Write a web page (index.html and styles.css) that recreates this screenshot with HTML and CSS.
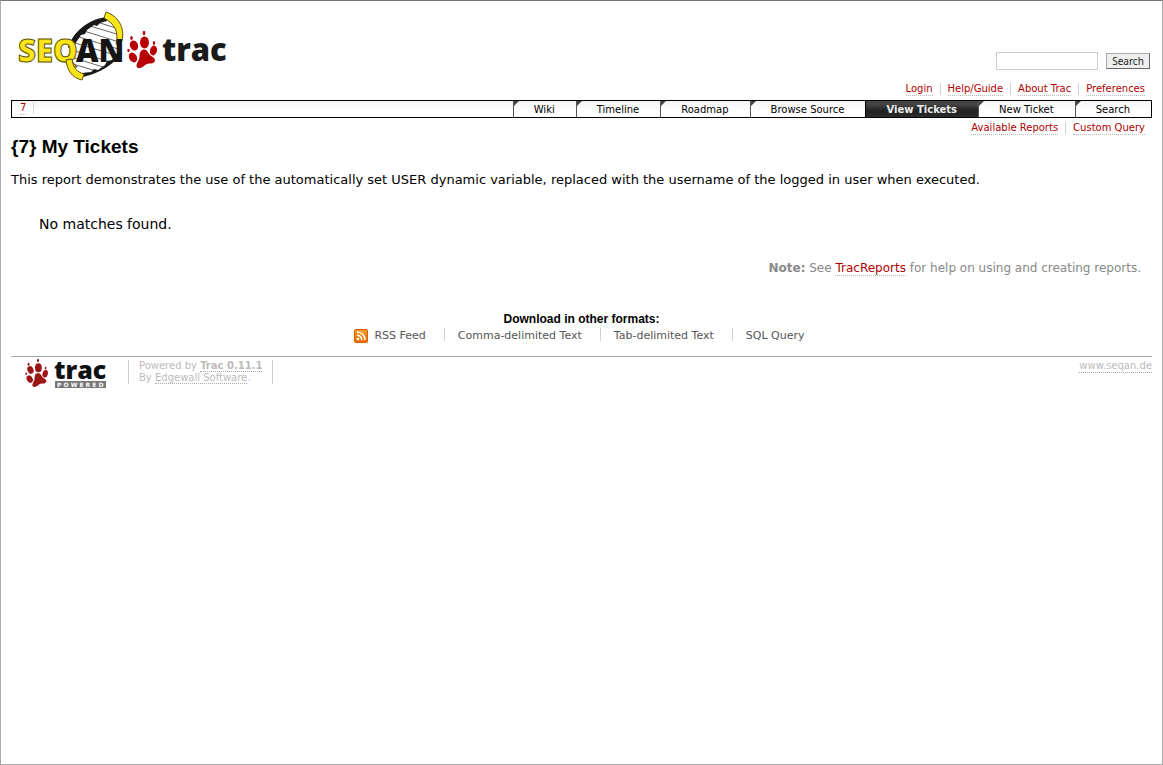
FILE: index.html
```html
<!DOCTYPE html>
<html lang="en">
<head>
<meta charset="utf-8">
<title>{7} My Tickets – SeqAn</title>
<link rel="stylesheet" href="styles.css">
</head>
<body>
<svg class="defs" aria-hidden="true">
  <symbol id="paw" viewBox="0 0 30 37">
    <path d="M17 18.500c3 0 4 3 5.500 5s5.500 3 5.500 5.500c0 3-3 3.500-6 3.500-4 0-5.500 4.500-9.500 4.500-3 0-3.500-2-2.500-4.500s2.500-4 2.500-7 1-7 4.500-7z"/>
    <ellipse cx="7" cy="14.500" rx="4" ry="5.200" transform="rotate(-22 7 14.500)"/>
    <ellipse cx="17.500" cy="11.500" rx="4.500" ry="6" />
    <ellipse cx="26.500" cy="19.500" rx="3.500" ry="5" transform="rotate(14 26.500 19.500)"/>
    <ellipse cx="6" cy="26.500" rx="3.800" ry="5.200" transform="rotate(-30 6 26.500)"/>
    <ellipse cx="17" cy="2" rx="1.300" ry="2.200"/>
    <ellipse cx="4.500" cy="7" rx="1.300" ry="2"/>
    <ellipse cx="27" cy="12" rx="1.100" ry="2"/>
    <ellipse cx="1.500" cy="19.500" rx="1.200" ry="1.800"/>
  </symbol>
</svg>

<header class="banner">
  <a class="logo" href="#" aria-label="SEQAN trac">
    <svg width="220" height="76" viewBox="11 8 220 76">
      <path class="helix" d="M69 50C75 30 90 20 106 19L118 28C120 48 108 66 83 73Q70 66 69 50z"/>
      <path class="rungs" d="M97 22l22 7M90 26l30 9M84 31l35 11M79 37l39 12M75 43l40 12M72 50l38 12M71 57l32 10M73 64l20 6"/>
      <path class="strand" d="M68 48C73 32 87 20 106 17l1 4-7 2-3 3-3-1-7 5-2 4-4 1-6 9zM82 73l9-1 3-3 4 1 7-5 2-4 5-1 6-8 4 1C113 65 100 73 83 77z"/>
      <path class="ribbon" d="M106 12C118 16 125 27 122 41l-4 4-2-1C119 32 115 24 104 18z"/>
      <text class="logo-seq" x="18" y="62">SEQ</text>
      <path class="ribbon" d="M66 60l6-1C73 68 77 72 84 74l-2 6C72 78 67 70 66 60z"/>
      <text class="logo-an" x="76" y="62">AN</text>
      <use class="paw" href="#paw" x="127" y="31" width="30" height="37"/>
      <text class="logo-trac" x="162" y="61">trac</text>
    </svg>
  </a>
  <div class="tools">
    <form class="search">
      <input type="text" aria-label="Search">
      <button type="button">Search</button>
    </form>
    <nav class="links" aria-label="Account">
      <a href="#">Login</a><a href="#">Help/Guide</a><a href="#">About Trac</a><a href="#">Preferences</a>
    </nav>
  </div>
</header>

<div class="mainnav">
  <div class="path"><a href="#">7</a></div>
  <nav class="tabs" aria-label="Main">
    <a href="#">Wiki</a>
    <a href="#">Timeline</a>
    <a href="#">Roadmap</a>
    <a href="#">Browse Source</a>
    <a class="active" href="#">View Tickets</a>
    <a href="#">New Ticket</a>
    <a href="#">Search</a>
  </nav>
</div>

<nav class="links context" aria-label="Reports">
  <a href="#">Available Reports</a><a href="#">Custom Query</a>
</nav>

<main>
  <h1>{7} My Tickets</h1>
  <p class="description">This report demonstrates the use of the automatically set USER dynamic variable, replaced with the username of the logged in user when executed.</p>
  <p class="empty">No matches found.</p>
  <p class="help"><strong>Note:</strong> See <a href="#">TracReports</a> for help on using and creating reports.</p>
</main>

<section class="formats">
  <h2>Download in other formats:</h2>
  <div class="format-list">
    <a class="rss" href="#"><svg width="14" height="14" viewBox="0 0 14 14" aria-hidden="true">
      <defs><linearGradient id="orange" x2="0" y2="1"><stop stop-color="#f8a02c"/><stop offset="1" stop-color="#ee6c04"/></linearGradient></defs>
      <rect x=".5" y=".5" width="13" height="13" rx="1.500" fill="url(#orange)" stroke="#dc5c00"/>
      <circle cx="4" cy="10" r="1.300" fill="#fff"/>
      <path d="M3 6.200a4.800 4.800 0 0 1 4.800 4.800M3 3a8 8 0 0 1 8 8" fill="none" stroke="#fff" stroke-width="1.500"/>
    </svg>RSS Feed</a><a href="#">Comma-delimited Text</a><a href="#">Tab-delimited Text</a><a href="#">SQL Query</a>
  </div>
</section>

<footer class="footer">
  <a class="powered" href="#" aria-label="Trac Powered">
    <svg width="107" height="31" viewBox="0 0 107 31">
      <use class="paw-small" href="#paw" x="13" y="2" width="25" height="28"/>
      <text class="powered-trac" x="43" y="22">trac</text>
      <rect x="44" y="24" width="51" height="7" fill="#777"/>
      <text class="powered-label" x="46" y="30">P O W E R E D</text>
    </svg>
  </a>
  <p class="credits">Powered by <a href="#"><strong>Trac 0.11.1</strong></a><br>By <a href="#">Edgewall Software</a>.</p>
  <a class="site" href="#">www.seqan.de</a>
</footer>
</body>
</html>
```
FILE: styles.css
```css
* { box-sizing: border-box; }

body {
  margin: 0;
  min-height: 100vh;
  padding: 7px 10px;
  border: 1px solid #aaa;
  border-top-color: #777;
  background: #fff;
  color: #000;
  font: 13px/16px Verdana, "DejaVu Sans", sans-serif;
}

p, h1, h2 { margin: 0; }

a {
  color: #b00000;
  text-decoration: none;
}

.defs {
  position: absolute;
  width: 0;
  height: 0;
}

.banner {
  display: flex;
  justify-content: space-between;
  height: 92px;
}

.logo svg, .powered svg { display: block; overflow: visible; }

.helix { fill: #fff; }
.rungs { fill: none; stroke: #666; stroke-width: 1; }
.strand { fill: #181818; }
.ribbon { fill: #fde31a; stroke: #5c5500; stroke-width: 1; }
.paw { fill: #b60205; }
.paw-small { fill: #9c1515; }

.logo-seq, .logo-an, .logo-trac, .powered-trac {
  font-family: "Open Sans", sans-serif;
  font-weight: 800;
}

.logo-seq, .logo-an, .logo-trac { font-size: 31px; }
.logo-seq { fill: #fde31a; stroke: #5c5500; stroke-width: 1; }
.logo-an { fill: #151515; }
.logo-trac { fill: #1b1b1b; }
.powered-trac { font-size: 25px; fill: #111; }
.powered-label { font: bold 6px "DejaVu Sans", sans-serif; fill: #fff; }

.tools {
  display: flex;
  flex-direction: column;
  align-items: flex-end;
  justify-content: flex-end;
  gap: 13px;
  padding-bottom: 4px;
}

.search {
  display: flex;
  align-items: center;
  gap: 8px;
  padding-right: 2px;
}

.search input {
  width: 102px;
  height: 18px;
  border: 1px solid #ccc;
  padding: 0 2px;
  font: inherit;
}

.search button {
  width: 44px;
  height: 16px;
  padding: 0;
  border: 1px solid;
  border-color: #aaa #666 #666 #aaa;
  background: #eee;
  color: #222;
  font: 10px/13px "Noto Sans", sans-serif;
}

.links {
  display: flex;
  justify-content: flex-end;
  padding-right: 7px;
  font-size: 10px;
  line-height: 12px;
}

.links a { border-bottom: 1px dotted #bbb; }

.links a + a {
  position: relative;
  margin-left: 15px;
}

.links a + a::before {
  content: "";
  position: absolute;
  left: -8px;
  top: 0;
  height: 12px;
  border-left: 1px solid #d0d0d0;
}

.mainnav {
  display: flex;
  justify-content: space-between;
  height: 18px;
  border: 1px solid #000;
  background: linear-gradient(#f4f4f4, #fff 60%);
  font-size: 10px;
  line-height: 16px;
}

.path {
  height: 12px;
  margin: 1px 0 0;
  padding: 0 7px 0 8px;
  border-right: 1px solid #d7d7d7;
  line-height: 12px;
}

.path a { display: block; border-bottom: 1px dotted #bbb; }

.tabs { display: flex; }

.tabs a {
  padding: 1px 21px 0 20px;
  border-left: 1px solid #555;
  background: linear-gradient(135deg, #444 3px, transparent 4px);
  color: #000;
  line-height: 15px;
}

.tabs .active {
  border-color: #000;
  background: linear-gradient(#444 20%, #222 60%, #2b2b2b);
  color: #eee;
  font-weight: bold;
}

.context { margin-top: 4px; }

h1 {
  padding-top: 1px;
  font: bold 19px/22px "Liberation Sans", Arial, sans-serif;
}

.description { margin-top: 14px; }

.empty {
  padding: 28px 28px 0;
  font-size: 14px;
}

.help {
  padding: 28px 11px 0;
  color: #888;
  font-size: 12px;
  text-align: right;
}

.help a { border-bottom: 1px dotted #bbb; }

.formats {
  padding-top: 36px;
  text-align: center;
}

.formats h2 { font: bold 12px/15px "Liberation Sans", Arial, sans-serif; }

.format-list {
  display: flex;
  justify-content: center;
  margin-top: 1px;
  font-size: 11px;
  line-height: 16px;
}

.format-list a {
  position: relative;
  padding: 0 18px 0 14px;
  color: #555;
}

.format-list a + a::before {
  content: "";
  position: absolute;
  left: 0;
  top: 0;
  height: 13px;
  border-left: 1px solid #d0d0d0;
}

.format-list .rss {
  display: flex;
  align-items: center;
  gap: 6px;
}

.footer {
  display: flex;
  align-items: flex-start;
  margin-top: 12px;
  border-top: 1px solid #aaa;
  color: #bbb;
  font-size: 10px;
  line-height: 12px;
}

.footer a { color: #bbb; }

.credits {
  margin: 3px 0 0 10px;
  padding: 0 10px;
  border: solid #d0d0d0;
  border-width: 0 1px;
}

.credits a, .site { border-bottom: 1px dotted #aaa; }

.site { margin: 3px 0 0 auto; }
```
